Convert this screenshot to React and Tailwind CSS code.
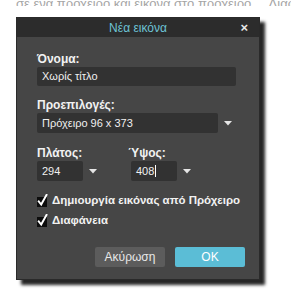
import React from "react";

function Arrow() {
  return (
    <svg width="8" height="5" viewBox="0 0 8 5" className="shrink-0">
      <path d="M0 0 L8 0 L4 4.5 Z" fill="#e6e6e6" />
    </svg>
  );
}

function Check() {
  return (
    <svg width="12" height="13" viewBox="0 0 12 13" className="shrink-0">
      <rect x="0" y="3" width="10" height="10" fill="#0d0d0d" />
      <path d="M1.8 7.5 L4.2 10.5 L9.5 1" stroke="#fff" strokeWidth="2" fill="none" strokeLinecap="square" />
    </svg>
  );
}

export default function App() {
  const font = { fontFamily: '"Liberation Sans", Arial, sans-serif' };
  return (
    <div className="w-[291px] h-[294px] bg-white overflow-hidden" style={font}>
      {/* text of the page behind, cut at the top */}
      <div className="h-[6px] overflow-hidden relative">
        <div className="absolute bottom-[-4px] left-[16px] text-[13px] leading-[13px] text-[#a5a5a5] whitespace-nowrap">
          σε ένα πρόχειρο και εικόνα στο πρόχειρο&nbsp;&nbsp;&nbsp;&nbsp; Διαφάνεια
        </div>
      </div>

      <div className="ml-[16px] mt-[11px] w-[244px] bg-[#464646] border border-[#2a2a2a] shadow-[5px_5px_3px_rgba(0,0,0,0.85)]">
        {/* title bar */}
        <div className="h-[19px] bg-[#2c2c2c] flex items-center justify-center relative">
          <span className="text-[12px] text-[#6cc3d5]">Νέα εικόνα</span>
          <span className="absolute right-[11px] top-[1px] text-[13px] font-bold text-[#e8e8e8] leading-[17px]">×</span>
        </div>

        <div className="pl-[20px] pr-[14px] pt-[15px] pb-[12px] text-white">
          <div className="text-[12px] font-bold leading-[14px] text-[#f2f2f2]">Όνομα:</div>
          <div className="mt-[1px] w-[199px] h-[19px] bg-[#323232] rounded-[2px] flex items-center pl-[5px] text-[11px] text-[#f0f0f0]">
            Χωρίς τίτλο
          </div>

          <div className="mt-[12px] text-[12px] font-bold leading-[14px] text-[#f2f2f2]">Προεπιλογές:</div>
          <div className="mt-[1px] flex items-center gap-[6px]">
            <div className="w-[181px] h-[20px] bg-[#323232] rounded-[2px] flex items-center pl-[5px] text-[11px] text-[#f0f0f0]">
              Πρόχειρο 96 x 373
            </div>
            <Arrow />
          </div>

          <div className="mt-[13px] flex gap-[34px]">
            <div>
              <div className="text-[12px] font-bold leading-[14px] text-[#f2f2f2]">Πλάτος:</div>
              <div className="mt-[1px] flex items-center gap-[6px]">
                <div className="w-[46px] h-[20px] bg-[#323232] rounded-[2px] flex items-center pl-[5px] text-[11px] text-[#f0f0f0]">
                  294
                </div>
                <Arrow />
              </div>
            </div>
            <div>
              <div className="text-[12px] font-bold leading-[14px] text-[#f2f2f2] -ml-[3px]">Ύψος:</div>
              <div className="mt-[1px] flex items-center gap-[6px]">
                <div className="w-[46px] h-[20px] bg-[#323232] rounded-[2px] flex items-center pl-[5px] text-[11px] text-[#f0f0f0]">
                  408<span className="inline-block w-px h-[12px] bg-white ml-[1px]" />
                </div>
                <Arrow />
              </div>
            </div>
          </div>

          <div className="mt-[12px] flex flex-col gap-[6px]">
            <div className="flex items-end gap-[3px] whitespace-nowrap">
              <Check />
              <span className="text-[11.5px] font-bold leading-[14px] text-[#f2f2f2]">Δημιουργία εικόνας από Πρόχειρο</span>
            </div>
            <div className="flex items-end gap-[3px] whitespace-nowrap">
              <Check />
              <span className="text-[11.5px] font-bold leading-[14px] text-[#f2f2f2]">Διαφάνεια</span>
            </div>
          </div>

          <div className="mt-[20px] flex justify-end gap-[10px]">
            <button className="w-[70px] h-[20px] bg-[#5c5c5c] rounded-[2px] text-[12px] text-[#e8e8e8]">Ακύρωση</button>
            <button className="w-[70px] h-[20px] bg-[#5bbdd6] rounded-[2px] text-[12px] text-white">OK</button>
          </div>
        </div>
      </div>
    </div>
  );
}
